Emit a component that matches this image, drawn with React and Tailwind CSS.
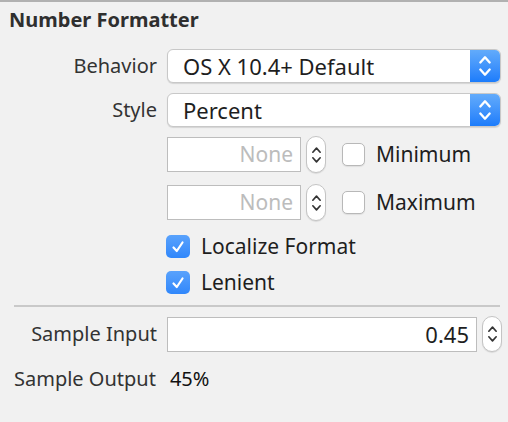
const FONT = { fontFamily: '"Noto Sans", "Liberation Sans", sans-serif' };

function Chevrons({ color = "#333", w = 12, h = 22, sw = 1.8 }) {
  return (
    <svg width={w} height={h} viewBox="0 0 12 22" fill="none">
      <path d="M2 8 L6 3.5 L10 8" stroke={color} strokeWidth={sw} strokeLinecap="round" strokeLinejoin="round" />
      <path d="M2 14 L6 18.5 L10 14" stroke={color} strokeWidth={sw} strokeLinecap="round" strokeLinejoin="round" />
    </svg>
  );
}

function Popup({ value }) {
  return (
    <div className="flex h-[34px] w-[334px] overflow-hidden rounded-[6px] border border-[#c8c8c8] bg-white shadow-[0_1px_1px_rgba(0,0,0,0.12)]">
      <div className="flex flex-1 items-center pl-[15px] text-[22px] leading-none text-[#1e1e1e]">{value}</div>
      <div className="flex w-[30px] items-center justify-center bg-gradient-to-b from-[#62abfb] to-[#1b7cfb]">
        <Chevrons color="#fff" w={14} h={26} sw={2} />
      </div>
    </div>
  );
}

function Stepper({ h = 37 }) {
  return (
    <div
      className="flex w-[20px] items-center justify-center rounded-full border border-[#c4c4c4] bg-white shadow-[0_1px_1px_rgba(0,0,0,0.1)]"
      style={{ height: h }}
    >
      <Chevrons color="#333" w={11} h={28} sw={1.8} />
    </div>
  );
}

function CheckBox({ checked }) {
  if (checked) {
    return (
      <div className="flex h-[23px] w-[24px] items-center justify-center rounded-[5px] bg-gradient-to-b from-[#59a2fc] to-[#3087fb]">
        <svg width="14" height="14" viewBox="0 0 14 14" fill="none">
          <path d="M2.5 7.5 L5.8 11 L11.5 2.5" stroke="#fff" strokeWidth="2.2" strokeLinecap="round" strokeLinejoin="round" />
        </svg>
      </div>
    );
  }
  return <div className="h-[23px] w-[23px] rounded-[5px] border border-[#b8b8b8] bg-white shadow-[0_1px_1px_rgba(0,0,0,0.08)]" />;
}

function NoneField({ label }) {
  return (
    <div className="flex h-[37px] items-center">
      <div className="flex h-[35px] w-[134px] items-center justify-end border border-[#bdbdbd] bg-white pr-[7px] text-[21px] text-[#bcbcbc]">
        None
      </div>
      <div className="ml-[5px]">
        <Stepper />
      </div>
      <div className="ml-[16px]">
        <CheckBox />
      </div>
      <span className="ml-[11px] text-[21px] text-[#1e1e1e]">{label}</span>
    </div>
  );
}

export default function App() {
  return (
    <div className="h-[422px] w-[508px] overflow-hidden border-t-2 border-[#b1b1b1] bg-[#f1f1f1]" style={FONT}>
      <div className="pl-[9px] pt-[6px] text-[20px] font-bold leading-[24px] text-[#2f2f2f]">Number Formatter</div>

      <div className="mt-[17px] flex h-[34px] items-center">
        <span className="w-[157px] text-right text-[20px] text-[#333]">Behavior</span>
        <div className="ml-[10px]">
          <Popup value="OS X 10.4+ Default" />
        </div>
      </div>

      <div className="mt-[10px] flex h-[34px] items-center">
        <span className="w-[157px] text-right text-[20px] text-[#333]">Style</span>
        <div className="ml-[10px]">
          <Popup value="Percent" />
        </div>
      </div>

      <div className="ml-[167px] mt-[9px]">
        <NoneField label="Minimum" />
      </div>
      <div className="ml-[167px] mt-[11px]">
        <NoneField label="Maximum" />
      </div>

      <div className="ml-[166px] mt-[14px] flex h-[23px] items-center">
        <CheckBox checked />
        <span className="ml-[11px] text-[21px] text-[#1e1e1e]">Localize Format</span>
      </div>
      <div className="ml-[166px] mt-[13px] flex h-[23px] items-center">
        <CheckBox checked />
        <span className="ml-[11px] text-[21px] text-[#1e1e1e]">Lenient</span>
      </div>

      <div className="ml-[14px] mr-[8px] mt-[11px] h-[2px] bg-[#c9c9c9]" />

      <div className="mt-[9px] flex h-[36px] items-center">
        <span className="w-[157px] text-right text-[20px] text-[#333]">Sample Input</span>
        <div className="ml-[10px] flex h-[35px] w-[310px] items-center justify-end border border-[#bdbdbd] bg-white pr-[7px] text-[22px] text-[#1e1e1e]">
          0.45
        </div>
        <div className="ml-[5px]">
          <Stepper h={36} />
        </div>
      </div>

      <div className="mt-[12px] flex h-[30px] items-center">
        <span className="pl-[14px] text-[20px] text-[#333]">Sample Output</span>
        <span className="ml-[14px] text-[20px] text-[#111]">45%</span>
      </div>
    </div>
  );
}
